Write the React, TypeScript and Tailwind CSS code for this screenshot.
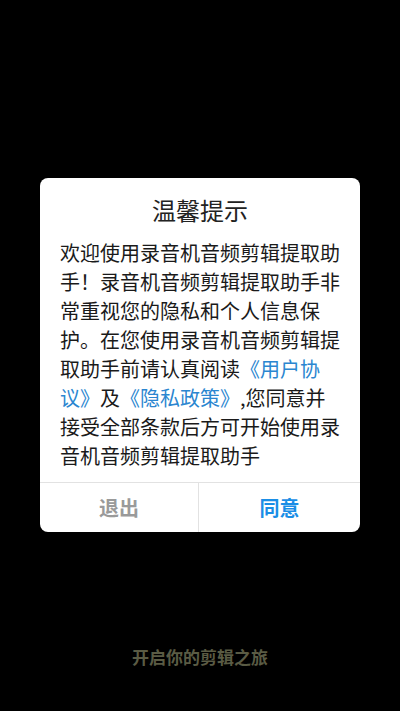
import React from "react";

export default function App() {
  const link = "text-[#2b86d0]";
  return (
    <div
      className="w-[400px] h-[711px] bg-black flex flex-col items-center relative"
      style={{ fontFamily: '"Noto Sans CJK SC", "Noto Sans", sans-serif' }}
    >
      <div className="mt-[178px] w-[320px] bg-white rounded-[8px] flex flex-col overflow-hidden">
        <div className="pt-[17px] pb-[13px] leading-[30px] text-center text-[24px] text-[#222]">
          温馨提示
        </div>
        <div className="px-[20px] pb-[12px] text-[20px] leading-[29px] text-[#1a1a1a]">
          <div>欢迎使用录音机音频剪辑提取助</div>
          <div>手！录音机音频剪辑提取助手非</div>
          <div>常重视您的隐私和个人信息保</div>
          <div>护。在您使用录音机音频剪辑提</div>
          <div>
            取助手前请认真阅读<span className={link}>《用户协</span>
          </div>
          <div>
            <span className={link}>议》</span>及<span className={link}>《隐私政策》</span>,您同意并
          </div>
          <div>接受全部条款后方可开始使用录</div>
          <div>音机音频剪辑提取助手</div>
        </div>
        <div className="h-[50px] border-t border-[#e2e2e2] flex">
          <div className="w-[159px] flex items-center justify-center text-[20px] font-bold text-[#9a9a9a] border-r border-[#e2e2e2]">
            退出
          </div>
          <div className="flex-1 flex items-center justify-center text-[20px] font-bold text-[#1a8ee6]">
            同意
          </div>
        </div>
      </div>
      <div className="mt-[113px] text-[17px] font-bold text-[#5a5b44] leading-[24px]">
        开启你的剪辑之旅
      </div>
    </div>
  );
}
